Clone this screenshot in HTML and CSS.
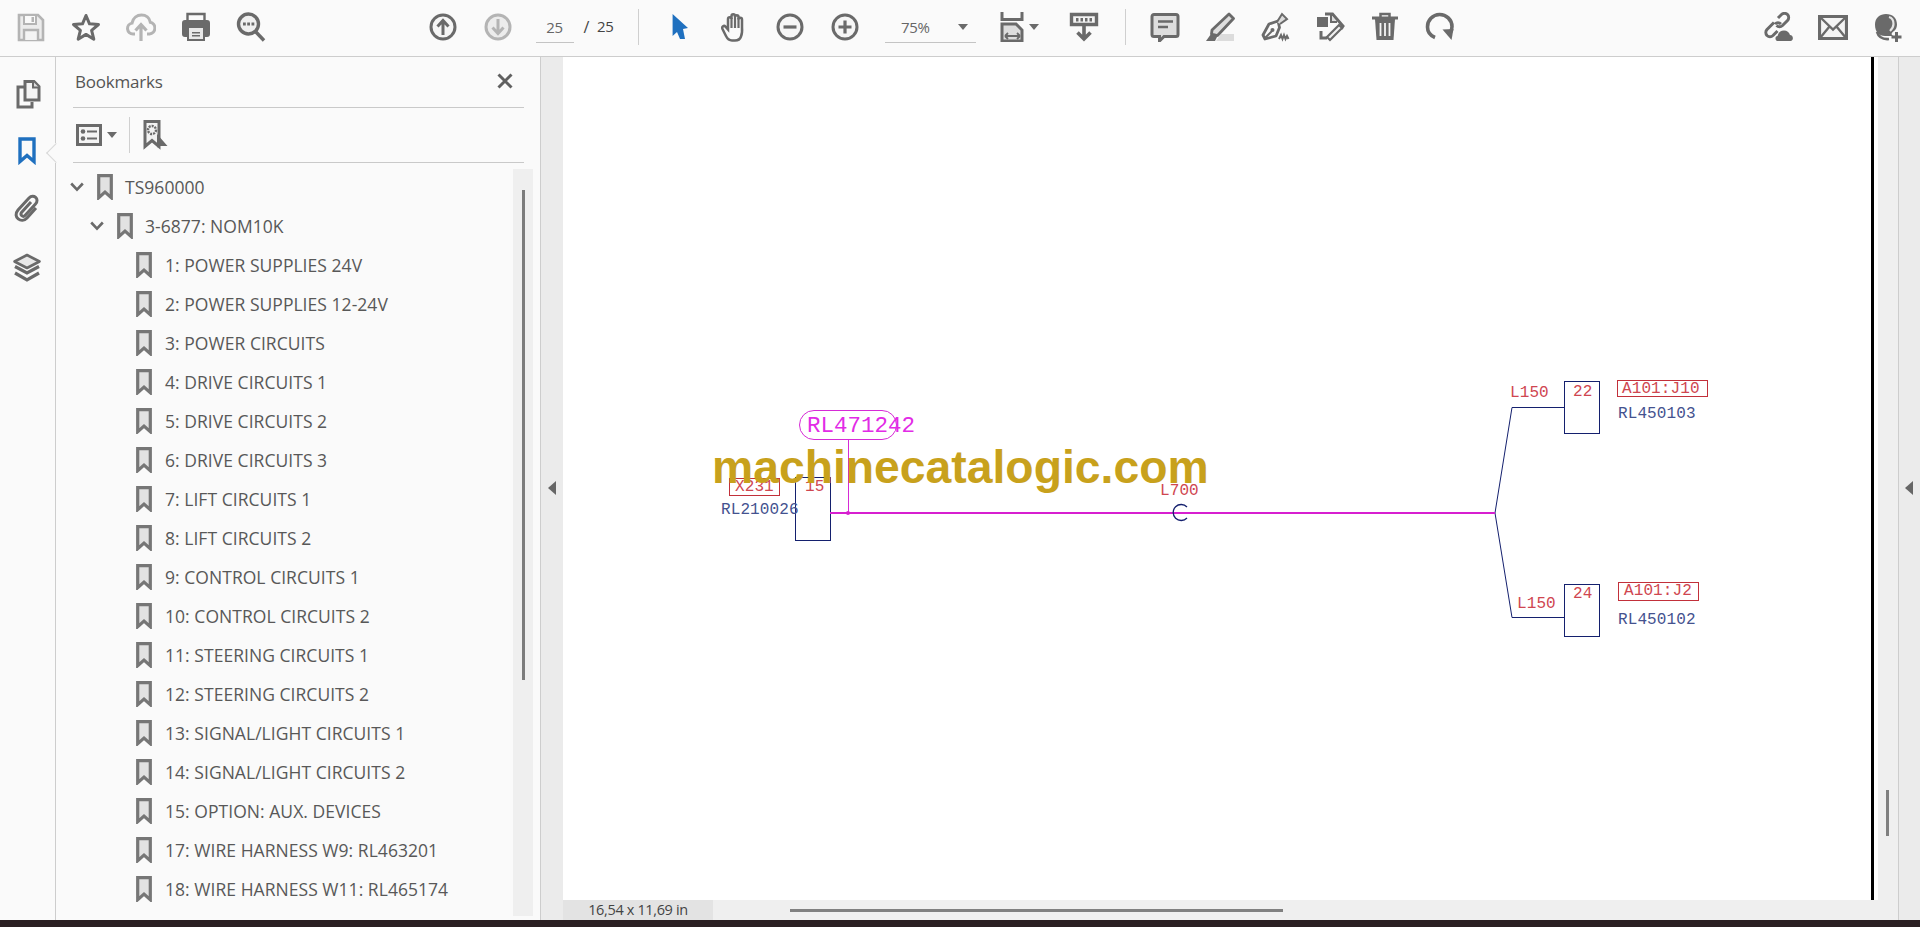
FILE: index.html
```html
<!DOCTYPE html>
<html lang="en">
<head>
<meta charset="utf-8">
<title>Bookmarks</title>
<link rel="stylesheet" href="styles.css">
</head>
<body>
<svg class="defs" width="0" height="0" aria-hidden="true">
  <symbol id="bm" viewBox="0 0 16 26"><path d="M1.700 1.700h12.600v22l-6.300-5.600-6.300 5.600z" fill="#e2e2e2" stroke="#767676" stroke-width="3.200"/></symbol>
  <symbol id="chev" viewBox="0 0 14 10"><path d="M1.200 1.500 7 7.600l5.800-6.100" fill="none" stroke="#6a6a6a" stroke-width="2.600"/></symbol>
</svg>
<div class="app">
  <header class="toolbar">
    <div class="group g-file">
      <span class="tool"><svg class="ico dim" viewBox="0 0 30 30"><path d="M3 3h19l5 5v20H3z" fill="#ececec" stroke="#b4b4b4" stroke-width="2.600"/><path d="M8 3h12v9H8z" fill="#fafafa" stroke="#b4b4b4" stroke-width="2"/><path d="M15.500 5h2.500v5h-2.500z" fill="#b4b4b4"/><path d="M8 28V18h14v10" fill="#f4f4f4" stroke="#b4b4b4" stroke-width="2.400"/></svg></span>
      <span class="tool"><svg class="ico" viewBox="0 0 30 30"><path d="M15 3.500l3.500 8.300 9 .7-6.900 5.900 2.200 8.800-7.800-4.800-7.800 4.800 2.200-8.800-6.900-5.900 9-.7z" fill="#fafafa" stroke="#6a6a6a" stroke-width="3" stroke-linejoin="round"/></svg></span>
      <span class="tool"><svg class="ico dim" viewBox="0 0 30 30"><path d="M9 22H7a5.500 5.500 0 0 1-1-10.900C7 6 11 3 15.500 3c4.500 0 8 3 8.800 7.200A6 6 0 0 1 23.500 22H21" fill="none" stroke="#b4b4b4" stroke-width="3"/><path d="M15 29V14M9.500 18.500 15 12.500l5.500 6" fill="none" stroke="#b4b4b4" stroke-width="3.200"/></svg></span>
      <span class="tool"><svg class="ico" viewBox="0 0 30 30"><path d="M6.500 2h17v8h-17z" fill="#fafafa" stroke="#6a6a6a" stroke-width="2.400"/><path d="M4 8h22a3 3 0 0 1 3 3v11a3 3 0 0 1-3 3h-2v4H6v-4H4a3 3 0 0 1-3-3V11a3 3 0 0 1 3-3z" fill="#6a6a6a"/><path d="M8 16h14v11H8z" fill="#e8e8e8"/><path d="M11 20h8v1.600h-8zM11 23h8v1.600h-8z" fill="#6a6a6a"/></svg></span>
      <span class="tool"><svg class="ico" viewBox="0 0 30 30"><circle cx="12.500" cy="12" r="10" fill="#f0f0f0" stroke="#6a6a6a" stroke-width="3.400"/><path d="M19.500 19.500 28 28.500" stroke="#6a6a6a" stroke-width="3.400"/><path d="M7 12h2.800M11.200 12H14M15.500 12h2.800" stroke="#6a6a6a" stroke-width="2.800"/></svg></span>
    </div>
    <div class="group g-nav">
      <span class="tool"><svg class="ico" viewBox="0 0 30 30"><circle cx="15" cy="15" r="12" fill="#f6f6f6" stroke="#6a6a6a" stroke-width="3"/><path d="M15 23V9M9.500 14.500 15 8.500l5.500 6" fill="none" stroke="#6a6a6a" stroke-width="3"/></svg></span>
      <span class="tool"><svg class="ico dim" viewBox="0 0 30 30"><circle cx="15" cy="15" r="12" fill="#ececec" stroke="#b4b4b4" stroke-width="3"/><path d="M15 7v14M9.500 15.500 15 21.500l5.500-6" fill="none" stroke="#b4b4b4" stroke-width="3"/></svg></span>
      <div class="field page-field"><span>25</span></div>
      <div class="page-total"><span class="slash">/</span><span>25</span></div>
    </div>
    <i class="sep sep-a"></i>
    <div class="group g-mode">
      <span class="tool"><svg class="ico" viewBox="0 0 30 30"><path d="M7.600 2 23 16l-5 1 2 10h-5l-3-7-4.400 4z" fill="#1f70bf"/></svg></span>
      <span class="tool"><svg class="ico" viewBox="0 0 30 30"><path d="M6 24 2.500 17c-1-2.500 1.500-4 3-2.300L8 17.500V7c0-2.500 3.500-2.500 3.500 0V4c0-2.500 3.500-2.500 3.500 0v1c0-2.500 3.500-2.500 3.500 0v2.500c0-2.300 3.500-2.300 3.500 0V15c.3 4 .3 6.500-1 9.500-1 3-3 4-6 4h-3c-3 0-4.500-1.500-6-4.500z" fill="#fafafa" stroke="#6a6a6a" stroke-width="2.500"/><path d="M11.500 6v10M15 4.500V16M18.500 6v10" stroke="#6a6a6a" stroke-width="2.200"/></svg></span>
      <span class="tool"><svg class="ico" viewBox="0 0 30 30"><circle cx="15" cy="15" r="12" fill="#f6f6f6" stroke="#6a6a6a" stroke-width="3"/><path d="M8.500 15h13" stroke="#6a6a6a" stroke-width="3.200"/></svg></span>
      <span class="tool"><svg class="ico" viewBox="0 0 30 30"><circle cx="15" cy="15" r="12" fill="#f6f6f6" stroke="#6a6a6a" stroke-width="3"/><path d="M8.500 15h13M15 8.500v13" stroke="#6a6a6a" stroke-width="3.200"/></svg></span>
    </div>
    <div class="field zoom-field"><span>75%</span><i class="caret"></i></div>
    <div class="group g-fit">
      <span class="tool tool-fit"><svg class="ico" viewBox="0 0 30 30"><path d="M5 0v7.500h20V0" fill="none" stroke="#6a6a6a" stroke-width="3"/><path d="M5 12h14l6 6v11H5z" fill="#ddd" stroke="#6a6a6a" stroke-width="3"/><path d="M8 24h15M8 24l3-3M8 24l3 3M23 24l-3-3M23 24l-3 3" fill="none" stroke="#6a6a6a" stroke-width="1.800"/></svg><i class="caret caret-fit"></i></span>
      <span class="tool"><svg class="ico" viewBox="0 0 30 30"><path d="M2.500 2.500h25v10h-25z" fill="#f4f4f4" stroke="#6a6a6a" stroke-width="3.400"/><path d="M7 6h2.500v3.500H7zM11.500 6H14v3.500h-2.500zM16 6h2.500v3.500H16zM20.500 6H23v3.500h-2.500z" fill="#6a6a6a"/><path d="M15 13v14M8.500 20.500 15 27l6.500-6.500" fill="none" stroke="#6a6a6a" stroke-width="3.600"/></svg></span>
    </div>
    <i class="sep sep-b"></i>
    <div class="group g-tools">
      <span class="tool"><svg class="ico" viewBox="0 0 30 30"><path d="M4 2.500h22a2 2 0 0 1 2 2v18a2 2 0 0 1-2 2H14l-4.500 4.500v-4.500H4a2 2 0 0 1-2-2v-18a2 2 0 0 1 2-2z" fill="#dedede" stroke="#6a6a6a" stroke-width="3"/><path d="M8 9.500h15M8 15h10" stroke="#6a6a6a" stroke-width="2.400"/></svg></span>
      <span class="tool"><svg class="ico" viewBox="0 0 30 30"><path d="M11 29h18v-7H16z" fill="#dcdcdc"/><path d="M24 2l4.500 4.500-16 17-6-1.500.5-4z" fill="#dedede" stroke="#6a6a6a" stroke-width="2.800" stroke-linejoin="round"/><path d="M6 22l-5 7h9l2.500-5z" fill="#6a6a6a"/></svg></span>
      <span class="tool"><svg class="ico" viewBox="0 0 30 30"><path d="M18 9 9 12 3 23l2 4 11-3 3.500-8.500z" fill="#fafafa" stroke="#6a6a6a" stroke-width="2.800" stroke-linejoin="round"/><path d="M5 26l7-7" stroke="#6a6a6a" stroke-width="2"/><circle cx="12.500" cy="18" r="2" fill="#6a6a6a"/><path d="M17 10 22 2l5 5-7 5" fill="#dcdcdc" stroke="#6a6a6a" stroke-width="2"/><path d="M19 27l2-4 1.500 4 1.500-4 1.500 4 1.500-3 1.500 3" fill="none" stroke="#6a6a6a" stroke-width="2"/></svg></span>
      <span class="tool"><svg class="ico" viewBox="0 0 30 30"><path d="M10 2h7.500L28 14l-2 3M6 19v7h6" fill="none" stroke="#6a6a6a" stroke-width="3"/><path d="M2 5h11v10H2z" fill="#6a6a6a"/><path d="M16 3v7h6" fill="#ddd" stroke="#6a6a6a" stroke-width="2"/><path d="M27 16 15 28l-3-3 12-12z" fill="#f2f2f2" stroke="#6a6a6a" stroke-width="2.200"/></svg></span>
      <span class="tool"><svg class="ico" viewBox="0 0 30 30"><path d="M2 6h26" stroke="#6a6a6a" stroke-width="3"/><path d="M10.500 5V2h9v3" fill="none" stroke="#6a6a6a" stroke-width="2.500"/><path d="M5 7h20l-1.500 21h-17z" fill="#6a6a6a"/><path d="M10.500 11v13M15 11v13M19.500 11v13" stroke="#f4f4f4" stroke-width="1.800"/></svg></span>
      <span class="tool"><svg class="ico" viewBox="0 0 30 30"><path d="M10 25.500C5 23.500 2.500 19.500 2.500 15A12 12 0 0 1 27 14.500c0 2-.5 4.500-2 6.500" fill="none" stroke="#6a6a6a" stroke-width="3.600"/><path d="M17.500 17.500 28.500 17l-2 11z" fill="#6a6a6a"/></svg></span>
    </div>
    <div class="group g-share">
      <span class="tool"><svg class="ico" viewBox="0 0 30 30"><path d="M15 6 18.500 2.500a4.500 4.500 0 0 1 6 0 4.500 4.500 0 0 1 0 6l-5 5a4.500 4.500 0 0 1-6 0" fill="none" stroke="#6a6a6a" stroke-width="3"/><path d="M12 12a4.500 4.500 0 0 1 6 0M11 10.500l-7 7a4.500 4.500 0 0 0 0 6 4.500 4.500 0 0 0 6 0l4.500-4.500" fill="none" stroke="#6a6a6a" stroke-width="3"/><path d="M15 29c-3 0-3.500-4.500-.5-5 1-3.500 3-5.500 6.500-5.500 3 0 5 1.500 6 4.500 3.500 0 4 6 .5 6z" fill="#6a6a6a"/></svg></span>
      <span class="tool"><svg class="ico" viewBox="0 0 30 30"><path d="M1.500 4.500h27v22h-27z" fill="#f4f4f4" stroke="#6a6a6a" stroke-width="3.200"/><path d="M2 5l13 12.500L28 5M2 26l9.500-11.500M28 26l-9.500-11.500" fill="none" stroke="#6a6a6a" stroke-width="2.400"/></svg></span>
      <span class="tool"><svg class="ico" viewBox="0 0 30 30"><path d="M13 2c6.500 0 11 4 11 10.500 0 2.500-1 5-3 6.500-3 2.500-3 3-1 5H12C6 24 2 20 2 12.500 2 6 7 2 13 2z" fill="#6a6a6a"/><path d="M16 5c3 .8 4.500 3.500 4.500 7 0 3-1.500 5-3.500 7" fill="none" stroke="#e4e4e4" stroke-width="2.200"/><path d="M4 20c1.500 5 6 7.500 12 7" fill="none" stroke="#6a6a6a" stroke-width="2.600"/><path d="M23.500 20v10M18.500 25h10" stroke="#6a6a6a" stroke-width="3"/></svg></span>
    </div>
  </header>

  <div class="main">
    <nav class="rail">
      <svg class="rail-ico ri-pages" viewBox="0 0 26 30"><path d="M10 2.500h9l5 5V21H10z" fill="#f4f4f4" stroke="#6a6a6a" stroke-width="3"/><path d="M18 2.500v6h6" fill="#ddd" stroke="#6a6a6a" stroke-width="2"/><path d="M9 8H3v20h14v-5" fill="none" stroke="#6a6a6a" stroke-width="3"/></svg>
      <svg class="rail-ico ri-bm" viewBox="0 0 18 28"><path d="M2 2h14v22.500l-7-6-7 6z" fill="#fafafa" stroke="#1f70bf" stroke-width="3.400"/></svg>
      <svg class="rail-ico ri-clip" viewBox="0 0 26 28"><path d="M17 8 7.500 18.500c-2 2.500 1.500 5 3.500 3L21.500 10c4.500-5-2-10.500-6.500-6L4 16c-6 7 3.500 14 9 8l9-10" fill="none" stroke="#6a6a6a" stroke-width="3"/></svg>
      <svg class="rail-ico ri-layers" viewBox="0 0 28 30"><path d="M14 2 26.500 8.500 14 15 1.500 8.500z" fill="#e8e8e8" stroke="#6a6a6a" stroke-width="2.600" stroke-linejoin="round"/><path d="M2 13.500l12 6.500 12-6.500M2 20l12 7 12-7" fill="none" stroke="#6a6a6a" stroke-width="3.200"/></svg>
      <i class="rail-notch"></i>
    </nav>

    <aside class="panel">
      <div class="panel-head">
        <span class="panel-title">Bookmarks</span>
        <svg class="close" viewBox="0 0 16 16"><path d="M1.500 1.500l13 13M14.500 1.500l-13 13" stroke="#606060" stroke-width="3"/></svg>
      </div>
      <div class="panel-tools">
        <svg class="opt" viewBox="0 0 26 22"><path d="M1.500 1.500h23v19h-23z" fill="#f4f4f4" stroke="#6a6a6a" stroke-width="3"/><circle cx="7" cy="7.500" r="2.300" fill="#6a6a6a"/><circle cx="7" cy="14.500" r="2.300" fill="#6a6a6a"/><path d="M11 7.500h10M11 14.500h10" stroke="#6a6a6a" stroke-width="2.200"/></svg>
        <i class="caret caret-opt"></i>
        <i class="panel-sep"></i>
        <svg class="addbm" viewBox="0 0 25 30"><path d="M2 1.500h14v25l-7-6-7 6z" fill="#f2f2f2" stroke="#6a6a6a" stroke-width="3"/><circle cx="9" cy="10" r="4" fill="#f2f2f2" stroke="#6a6a6a" stroke-width="2.400" stroke-dasharray="2 1"/><path d="M14 14l10.500 12H15l-1 2z" fill="#6a6a6a"/></svg>
      </div>
      <div class="tree-wrap">
        <ul class="tree">
          <li class="row lv0"><svg class="chev"><use href="#chev"/></svg><svg class="bm"><use href="#bm"/></svg><span>TS960000</span></li>
          <li class="row lv1"><svg class="chev"><use href="#chev"/></svg><svg class="bm"><use href="#bm"/></svg><span>3-6877: NOM10K</span></li>
          <li class="row lv2"><svg class="bm"><use href="#bm"/></svg><span>1: POWER SUPPLIES 24V</span></li>
          <li class="row lv2"><svg class="bm"><use href="#bm"/></svg><span>2: POWER SUPPLIES 12-24V</span></li>
          <li class="row lv2"><svg class="bm"><use href="#bm"/></svg><span>3: POWER CIRCUITS</span></li>
          <li class="row lv2"><svg class="bm"><use href="#bm"/></svg><span>4: DRIVE CIRCUITS 1</span></li>
          <li class="row lv2"><svg class="bm"><use href="#bm"/></svg><span>5: DRIVE CIRCUITS 2</span></li>
          <li class="row lv2"><svg class="bm"><use href="#bm"/></svg><span>6: DRIVE CIRCUITS 3</span></li>
          <li class="row lv2"><svg class="bm"><use href="#bm"/></svg><span>7: LIFT CIRCUITS 1</span></li>
          <li class="row lv2"><svg class="bm"><use href="#bm"/></svg><span>8: LIFT CIRCUITS 2</span></li>
          <li class="row lv2"><svg class="bm"><use href="#bm"/></svg><span>9: CONTROL CIRCUITS 1</span></li>
          <li class="row lv2"><svg class="bm"><use href="#bm"/></svg><span>10: CONTROL CIRCUITS 2</span></li>
          <li class="row lv2"><svg class="bm"><use href="#bm"/></svg><span>11: STEERING CIRCUITS 1</span></li>
          <li class="row lv2"><svg class="bm"><use href="#bm"/></svg><span>12: STEERING CIRCUITS 2</span></li>
          <li class="row lv2"><svg class="bm"><use href="#bm"/></svg><span>13: SIGNAL/LIGHT CIRCUITS 1</span></li>
          <li class="row lv2"><svg class="bm"><use href="#bm"/></svg><span>14: SIGNAL/LIGHT CIRCUITS 2</span></li>
          <li class="row lv2"><svg class="bm"><use href="#bm"/></svg><span>15: OPTION: AUX. DEVICES</span></li>
          <li class="row lv2"><svg class="bm"><use href="#bm"/></svg><span>17: WIRE HARNESS W9: RL463201</span></li>
          <li class="row lv2"><svg class="bm"><use href="#bm"/></svg><span>18: WIRE HARNESS W11: RL465174</span></li>
        </ul>
        <div class="vtrack"><i class="vthumb"></i></div>
      </div>
    </aside>

    <div class="gutter gutter-l"><i class="tri"></i></div>

    <section class="viewer">
      <div class="viewer-top">
        <div class="page">
          <svg class="sheet" viewBox="563 57 1308 843" width="1308" height="843">
            <g class="wire-navy">
              <rect x="795.500" y="477.500" width="35" height="63"/>
              <rect x="1564.500" y="381.500" width="35" height="52"/>
              <rect x="1564.500" y="584.500" width="35" height="52"/>
              <path d="M1495 513 1512 407.500H1564M1495 513 1512 617.500H1564"/>
            </g>
            <g class="wire-red">
              <rect x="729.500" y="478.500" width="50" height="17"/>
              <rect x="1617.500" y="380.500" width="90" height="16"/>
              <rect x="1618.500" y="582.500" width="80" height="18"/>
            </g>
            <g class="wire-pink">
              <rect x="799.500" y="410.500" width="97" height="29" rx="14.500"/>
              <path d="M848.500 439v74"/>
            </g>
            <path class="bus" d="M830 513H1495"/>
            <circle class="node" cx="848" cy="513" r="2"/>
            <path class="coil" d="M1187 507A8 8 0 1 0 1187 518"/>
            <text class="t-lbl t-red" x="735" y="491">X231</text>
            <text class="t-lbl t-red" x="805" y="491">15</text>
            <text class="t-lbl t-navy" x="721" y="514">RL210026</text>
            <text class="t-lbl t-red" x="1160" y="495">L700</text>
            <text class="t-big" x="807" y="432">RL471242</text>
            <text class="t-lbl t-red" x="1510" y="397">L150</text>
            <text class="t-lbl t-red" x="1573" y="396">22</text>
            <text class="t-lbl t-red" x="1622" y="393">A101:J10</text>
            <text class="t-lbl t-navy" x="1618" y="418">RL450103</text>
            <text class="t-lbl t-red" x="1517" y="608">L150</text>
            <text class="t-lbl t-red" x="1573" y="598">24</text>
            <text class="t-lbl t-red" x="1624" y="595">A101:J2</text>
            <text class="t-lbl t-navy" x="1618" y="624">RL450102</text>
            <text class="t-mark" x="712" y="483">machinecatalogic.com</text>
          </svg>
        </div>
        <div class="page-edge"></div>
        <div class="vscroll"><i class="vscroll-thumb"></i></div>
      </div>
      <div class="status">
        <div class="status-size">16,54 x 11,69 in</div>
        <div class="hscroll"><i class="hthumb"></i></div>
      </div>
    </section>

    <div class="gutter gutter-r"><i class="tri"></i></div>
  </div>
  <div class="taskbar"></div>
</div>
</body>
</html>
```
FILE: styles.css
```css
* { box-sizing: border-box; }
html, body { margin: 0; height: 100%; overflow: hidden; }
body { font-family: "Open Sans", "Noto Sans", sans-serif; color: #555; background: #fafafa; }
i { display: block; }
.defs { position: absolute; }

.app { display: flex; flex-direction: column; height: 927px; }

/* toolbar */
.toolbar { flex: none; height: 57px; display: flex; align-items: center; background: #fafafa; border-bottom: 1px solid #cdcdcd; }
.group { display: flex; align-items: center; }
.tool { width: 55px; height: 56px; display: flex; align-items: center; justify-content: center; padding-bottom: 2px; position: relative; }
.ico { width: 30px; height: 30px; display: block; }
.g-file { margin-left: 3.500px; }
.g-nav { margin-left: 137px; }
.field { height: 32px; border-bottom: 1px solid #c4c4c4; display: flex; align-items: center; font-size: 15px; letter-spacing: -.3px; color: #666; margin-top: -2px; }
.page-field { width: 38px; margin-left: 10px; justify-content: center; }
.page-total { display: flex; gap: 8px; margin-left: 10px; width: 36px; font-size: 15px; letter-spacing: -.3px; color: #444; padding-bottom: 2px; }
.slash { font-size: 16px; }
.sep { width: 1px; height: 36px; background: #cfcfcf; margin-top: -2px; }
.sep-a { margin-left: 18.500px; }
.g-mode { margin-left: 13.500px; }
.zoom-field { width: 91px; margin-left: 12.500px; padding-left: 16px; }
.caret { width: 0; height: 0; border: 5px solid transparent; border-top: 6px solid #6a6a6a; border-bottom: 0; }
.zoom-field .caret { margin-left: 28px; }
.g-fit { margin-left: 9px; }
.tool-fit { width: 54px; justify-content: flex-start; padding-left: 12px; }
.ico + .caret-fit { position: absolute; left: 44px; top: 24px; }
.g-fit .tool:last-child { width: 55px; margin-left: 17px; }
.sep-b { margin-left: 13.500px; }
.g-tools { margin-left: 12px; }
.g-share { margin-left: auto; margin-right: 4.500px; }

/* body area */
.main { flex: 1; min-height: 0; display: flex; }
.rail { flex: none; width: 56px; border-right: 1px solid #cdcdcd; background: #fafafa; position: relative; display: flex; flex-direction: column; align-items: center; padding-top: 22px; padding-right: 1px; }
.rail-ico { display: block; }
.ri-pages { width: 26px; height: 30px; margin-left: 1px; }
.ri-bm { width: 18px; height: 28px; margin-top: 28px; }
.ri-clip { width: 26px; height: 28px; margin-top: 29px; }
.ri-layers { width: 28px; height: 30px; margin-top: 31px; }
.rail-notch { position: absolute; right: -1px; top: 86px; width: 10px; height: 20px; background: #fafafa; }
.rail-notch::before { content: ""; position: absolute; left: 3px; top: 3px; width: 13px; height: 13px; transform: rotate(45deg); background: #fafafa; border-left: 1px solid #d8d8d8; border-bottom: 1px solid #d8d8d8; }

.panel { flex: none; width: 485px; background: #fafafa; border-right: 1px solid #cdcdcd; display: flex; flex-direction: column; padding-left: 17px; }
.panel-head { flex: none; height: 51px; width: 451px; border-bottom: 1px solid #c9c9c9; display: flex; align-items: center; justify-content: space-between; padding: 0 11px 0 2px; }
.panel-title { font-size: 17px; letter-spacing: -.2px; color: #555; padding-bottom: 1px; }
.close { width: 16px; height: 16px; margin-top: -3px; }
.panel-tools { flex: none; height: 55px; width: 451px; border-bottom: 1px solid #c9c9c9; display: flex; align-items: center; padding-left: 3px; }
.opt { width: 26px; height: 22px; }
.caret-opt { margin-left: 5px; }
.panel-sep { width: 1px; height: 36px; background: #d0d0d0; margin-left: 12px; }
.addbm { width: 25px; height: 30px; margin-left: 13px; }

.tree-wrap { flex: 1; min-height: 0; display: flex; padding-top: 4px; padding-bottom: 4px; margin-left: -3px; }
.tree { list-style: none; margin: 0; padding: 0; flex: none; width: 443px; overflow: hidden; }
.row { height: 39px; display: flex; align-items: center; font-size: 17.500px; letter-spacing: .04px; color: #585858; white-space: nowrap; }
.chev { width: 14px; height: 10px; margin-right: 13px; flex: none; }
.bm { width: 16px; height: 26px; margin-right: 13px; flex: none; }
.lv0 .bm, .lv1 .bm { margin-right: 12px; }
.lv0 { margin-left: 0; }
.lv1 { margin-left: 20px; }
.lv2 { margin-left: 66px; }
.vtrack { flex: none; width: 20px; background: #efefef; display: flex; justify-content: center; padding-top: 21px; margin-top: 2px; }
.vthumb { width: 3px; height: 490px; background: #7c7c7c; }

.gutter { flex: none; background: #ebebeb; display: flex; align-items: center; justify-content: center; padding-bottom: 2px; }
.gutter-l { width: 22px; padding-right: 1px; }
.gutter-r { width: 22px; border-left: 1px solid #cdcdcd; padding-right: 2px; }
.tri { width: 0; height: 0; border: 7px solid transparent; border-right: 8px solid #666; border-left: 0; }

.viewer { flex: 1; min-width: 0; display: flex; flex-direction: column; background: #fff; }
.viewer-top { flex: 1; min-height: 0; display: flex; }
.page { flex: none; width: 1308px; background: #fff; }
.sheet { display: block; }
.page-edge { flex: none; width: 7px; background: #fff; border-left: 3px solid #000; }
.vscroll { flex: 1; background: #efefef; position: relative; }
.vscroll-thumb { position: absolute; left: 8px; top: 733px; width: 3px; height: 46px; background: #808080; }

.status { flex: none; height: 20px; display: flex; align-items: center; background: #efefef; }
.status-size { flex: none; width: 150px; height: 20px; background: #e3e3e3; font-size: 14.500px; letter-spacing: -.35px; color: #444; text-align: center; line-height: 20px; }
.hscroll { flex: none; padding-left: 77px; }
.hthumb { width: 493px; height: 3px; background: #808080; }

.taskbar { flex: none; height: 7px; background: #2a1f22; }

/* drawing */
.wire-navy rect, .wire-navy path { fill: none; stroke: #14206e; stroke-width: 1; }
.coil { fill: none; stroke: #14206e; stroke-width: 1.300; }
.wire-red rect { fill: none; stroke: #c2303a; stroke-width: 1; }
.wire-pink rect, .wire-pink path { fill: none; stroke: #d62bd6; stroke-width: 1; }
.bus { fill: none; stroke: #d71fd0; stroke-width: 2; }
.node { fill: #d71fd0; }
.t-lbl { font-family: "Liberation Mono", monospace; font-size: 16px; letter-spacing: .1px; }
.t-red { fill: #cf4650; }
.t-navy { fill: #44528f; }
.t-big { font-family: "Liberation Mono", monospace; font-size: 22.500px; fill: #e22be6; }
.t-mark { font-family: "Liberation Sans", Arial, sans-serif; font-weight: 700; font-size: 46.300px; fill: #c8a11c; }
```
